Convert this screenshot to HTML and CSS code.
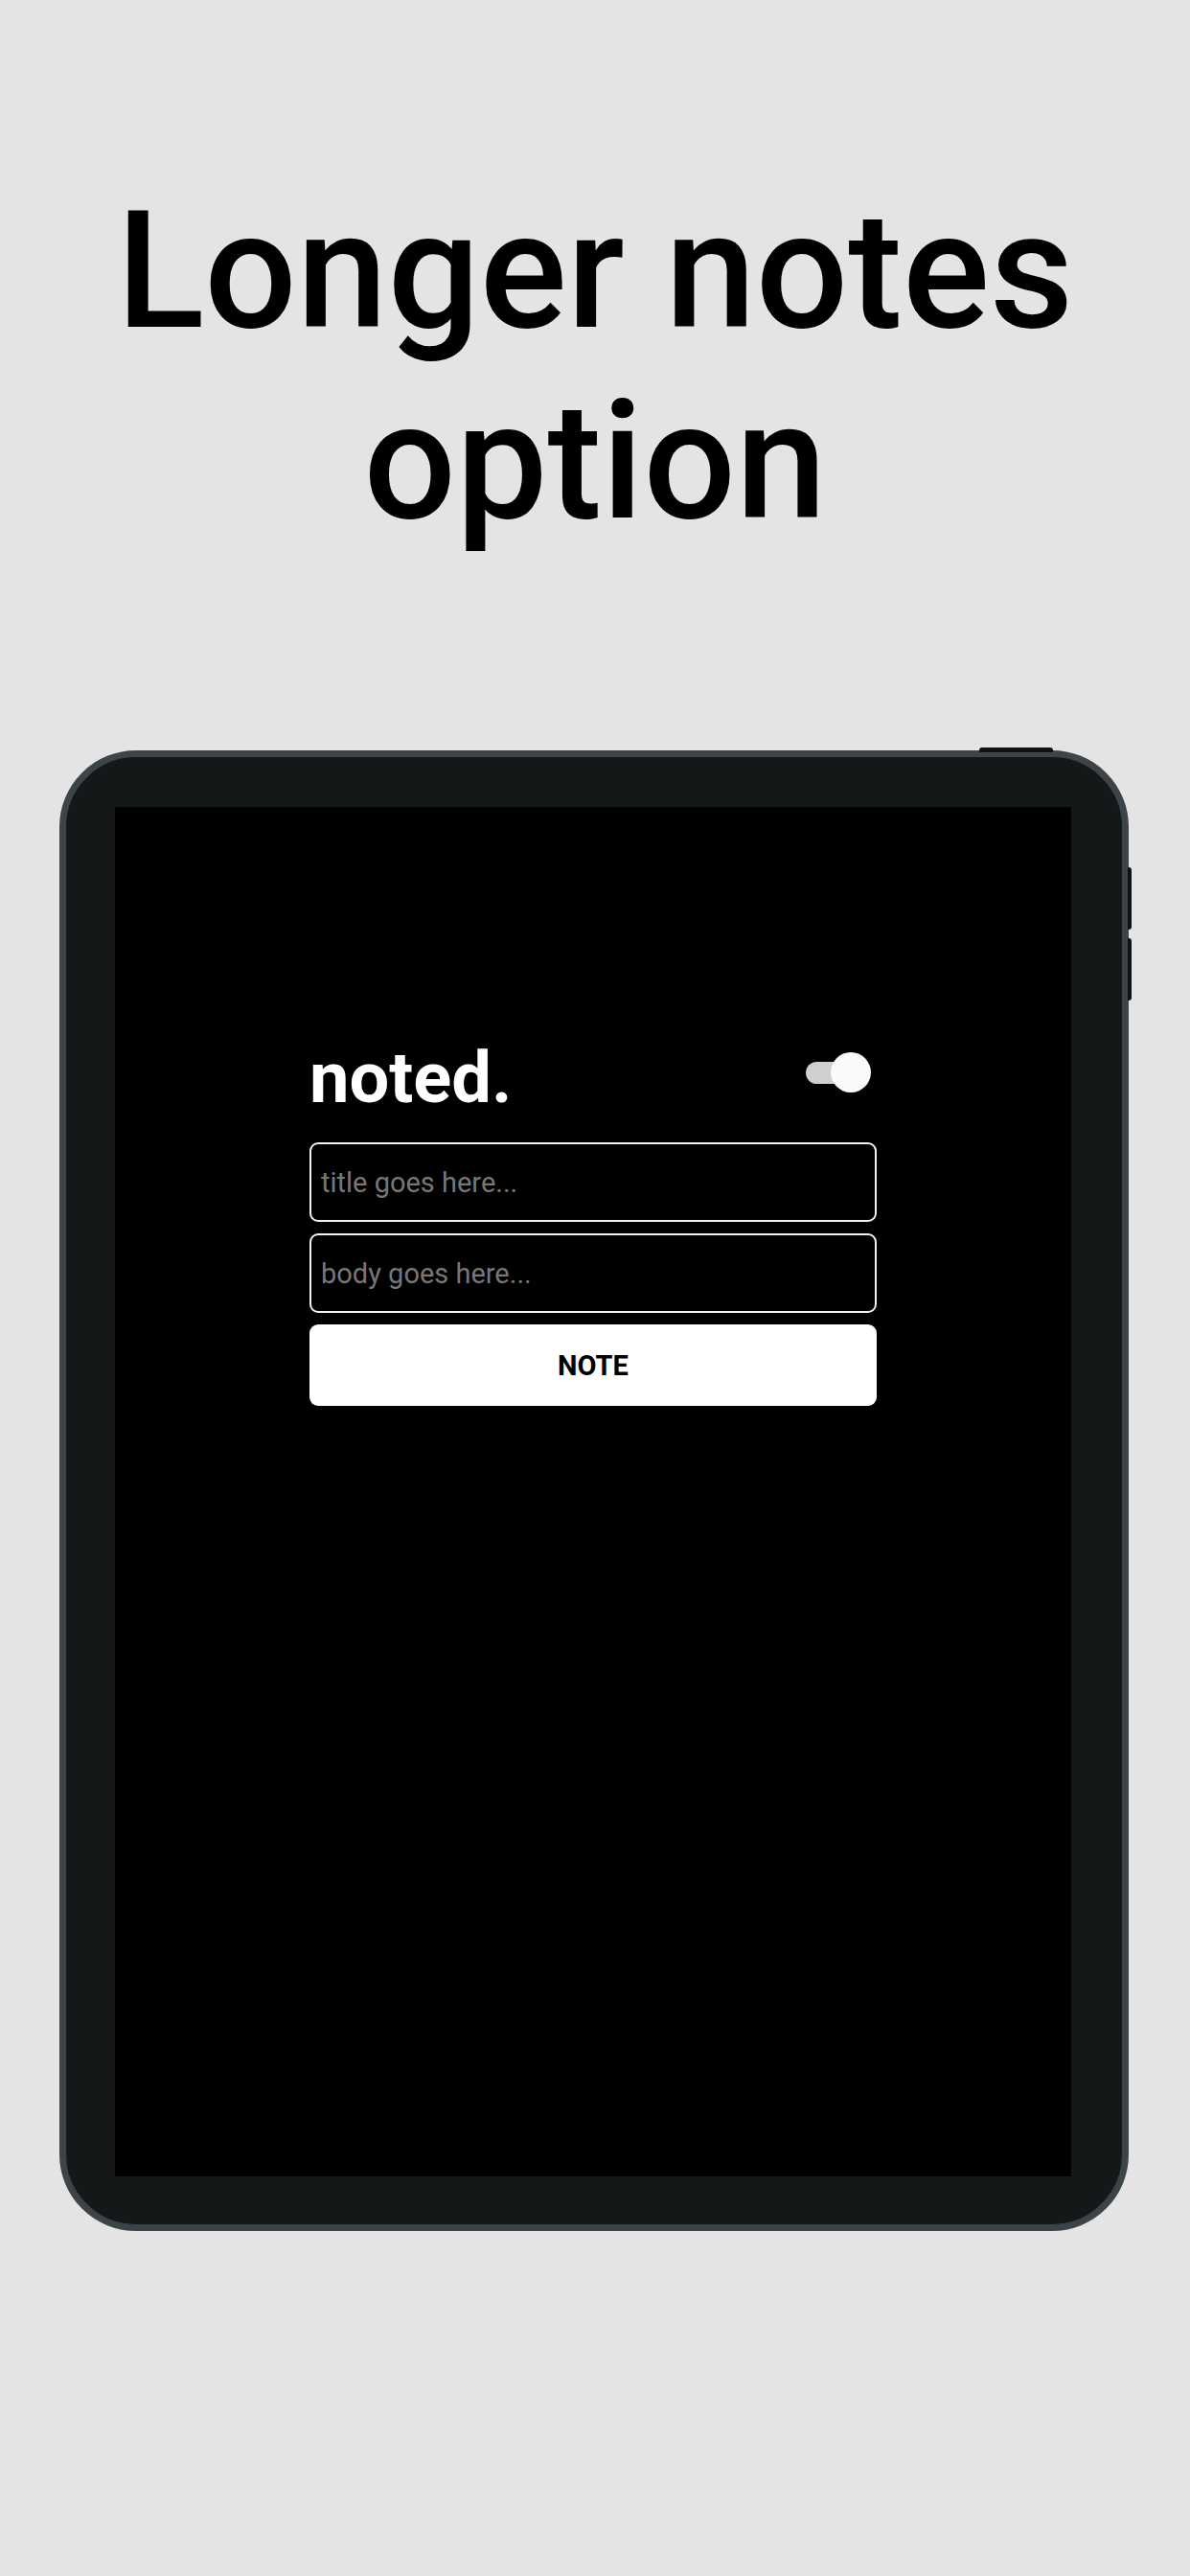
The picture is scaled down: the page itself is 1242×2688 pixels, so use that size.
FILE: index.html
```html
<!DOCTYPE html>
<html lang="en">
<head>
    <meta charset="UTF-8">
    <meta name="viewport" content="width=device-width, initial-scale=1.0">
    <title>noted. - Longer notes option</title>
    <link rel="stylesheet" href="styles.css">
</head>
<body>
    <h1 class="headline">Longer notes<br>option</h1>

    <div class="tablet">
        <span class="btn-top"></span>
        <span class="btn-side btn-side-1"></span>
        <span class="btn-side btn-side-2"></span>

        <div class="screen">
            <div class="app">
                <div class="app-header">
                    <div class="logo">noted.</div>
                    <div class="toggle">
                        <span class="toggle-track"></span>
                        <span class="toggle-thumb"></span>
                    </div>
                </div>

                <input type="text" class="field" placeholder="title goes here...">
                <input type="text" class="field" placeholder="body goes here...">
                <button type="button" class="note-button">NOTE</button>
            </div>
        </div>
    </div>
</body>
</html>
```

FILE: styles.css
```css
* {
    margin: 0;
    padding: 0;
    box-sizing: border-box;
}

body {
    background-color: #e4e4e4;
    font-family: Roboto, "Noto Sans", Arial, sans-serif;
    width: 1242px;
    height: 2688px;
    overflow: hidden;
}

.headline {
    padding-top: 184px;
    text-align: center;
    font-size: 170px;
    font-weight: 500;
    line-height: 199px;
    color: #000;
}

.tablet {
    position: relative;
    width: 1116px;
    margin: 201px 0 0 62px;
    padding: 52px 52px 50px 51px;
    background-color: #151819;
    border: 7px solid #3d4447;
    border-radius: 80px;
}

.btn-top {
    position: absolute;
    top: -10px;
    left: 953px;
    width: 77px;
    height: 5px;
    background-color: #0f1213;
    border-radius: 3px 3px 0 0;
}

.btn-side {
    position: absolute;
    right: -10px;
    width: 4px;
    height: 65px;
    background-color: #0f1213;
    border-radius: 0 3px 3px 0;
}

.btn-side-1 {
    top: 115px;
}

.btn-side-2 {
    top: 189px;
}

.screen {
    width: 998px;
    height: 1429px;
    background-color: #000;
    padding-top: 240px;
}

.app {
    width: 592px;
    margin: 0 auto;
    display: flex;
    flex-direction: column;
    gap: 12px;
}

.app-header {
    display: flex;
    justify-content: space-between;
    align-items: flex-start;
    margin-bottom: 12px;
}

.logo {
    color: #fff;
    font-size: 74px;
    font-weight: 700;
    line-height: 86px;
}

.toggle {
    position: relative;
    width: 68px;
    height: 42px;
    margin: 16px 6px 0 0;
}

.toggle-track {
    position: absolute;
    left: 0;
    top: 10px;
    width: 54px;
    height: 23px;
    border-radius: 12px;
    background-color: #cfcfcf;
}

.toggle-thumb {
    position: absolute;
    right: 0;
    top: 0;
    width: 42px;
    height: 42px;
    border-radius: 50%;
    background-color: #fafafa;
}

.field {
    display: block;
    width: 100%;
    height: 83px;
    padding: 0 10px;
    background-color: #000;
    border: 2px solid #f2f2f2;
    border-radius: 9px;
    color: #fff;
    font-family: Roboto, "Noto Sans", Arial, sans-serif;
    font-size: 29px;
    outline: none;
}

.field::placeholder {
    color: #777;
}

.note-button {
    width: 100%;
    height: 85px;
    background-color: #fff;
    border: none;
    border-radius: 9px;
    color: #000;
    font-family: Roboto, "Noto Sans", Arial, sans-serif;
    font-size: 29px;
    font-weight: 700;
    cursor: pointer;
}
```
